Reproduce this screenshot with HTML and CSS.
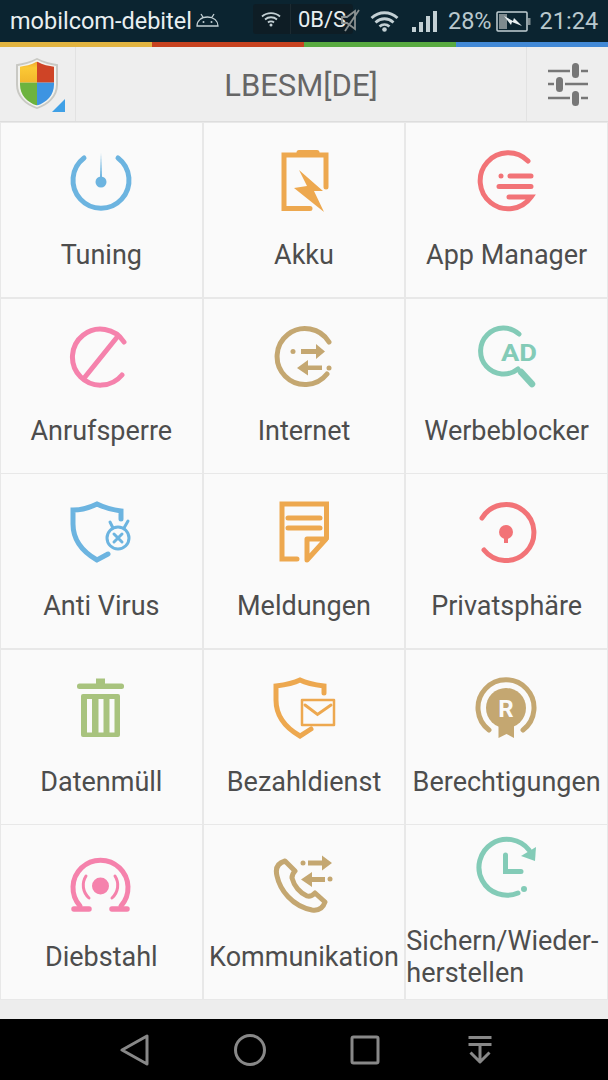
FILE: index.html
```html
<!DOCTYPE html>
<html>

<head>
    <title>LBESM[DE]</title>
    <link rel="stylesheet" href="styles.css">
</head>

<body>
    <!-- Status bar -->
    <div class="status">
        <span class="carrier">mobilcom-debitel</span>
        <svg class="android" width="23" height="14" viewBox="0 0 23 14">
            <path d="M1 13C1 8 5 4 11.500 4S22 8 22 13Z M5 1l2.500 4 M18 1l-2.500 4" />
            <circle cx="7.500" cy="9" r="1" />
            <circle cx="15.500" cy="9" r="1" />
        </svg>
        <div class="speed">
            <span class="speed-wifi">
                <svg width="20" height="16" viewBox="0 0 20 16">
                    <path d="M1 5.500C6 1 14 1 19 5.500 M4 8.500C7.500 5.500 12.500 5.500 16 8.500 M7 11.500C8.500 10 11.500 10 13 11.500" />
                    <circle cx="10" cy="14" r="1.500" />
                </svg>
            </span>
            <span class="speed-text">0B/S</span>
        </div>
        <svg class="mute" width="20" height="24" viewBox="0 0 20 24">
            <path d="M1 9h5l8-6v18l-8-6H1Z M18 2L4 23" />
        </svg>
        <svg class="wifi" width="29" height="21" viewBox="0 0 29 21">
            <path d="M1.500 7C9 0 20 0 27.500 7 M5.500 11.500C11 6.500 18 6.500 23.500 11.500 M9.500 15.500C12.500 13 16.500 13 19.500 15.500" />
            <circle cx="14.500" cy="18.500" r="2.300" />
        </svg>
        <div class="signal">
            <i class="bar-1"></i><i class="bar-2"></i><i class="bar-3"></i><i class="bar-4"></i>
        </div>
        <span class="percent">28%</span>
        <svg class="battery" width="35" height="21" viewBox="0 0 35 21">
            <rect x="1" y="1" width="30" height="19" rx="1" />
            <rect class="battery-fill" x="3" y="3" width="8" height="15" />
            <rect class="battery-fill" x="32" y="7" width="2.500" height="7" />
            <path class="battery-bolt" d="M8 5l9 5 1-3 8 8-10-4-1 3Z" />
        </svg>
        <span class="clock">21:24</span>
    </div>
    <div class="strip">
        <i class="strip-yellow"></i><i class="strip-red"></i><i class="strip-green"></i><i class="strip-blue"></i>
    </div>

    <!-- Title bar -->
    <div class="header">
        <div class="header-logo">
            <svg width="50" height="56" viewBox="0 0 50 56">
                <defs>
                    <clipPath id="shieldClip">
                        <path d="M22 4C16 8 10 9 5 10V30C5 42 12 50 22 54C32 50 39 42 39 30V10C34 9 28 8 22 4Z" />
                    </clipPath>
                    <linearGradient id="yellowFill" x1="0" y1="0" x2="0" y2="1">
                        <stop offset="0" stop-color="#e9922a" />
                        <stop offset="0.4" stop-color="#fbc935" />
                        <stop offset="1" stop-color="#f2b62c" />
                    </linearGradient>
                </defs>
                <g transform="scale(1 0.88)">
                    <path d="M22 0C16 4 8 6 1 7V30C1 44 10 53 22 58C34 53 43 44 43 30V7C36 6 28 4 22 0Z" fill="#c9c9c4" />
                    <path d="M22 2C16 6 9 8 3 9V30C3 43 11 51 22 56C33 51 41 43 41 30V9C35 8 28 6 22 2Z" fill="#f2f2ee" />
                    <g clip-path="url(#shieldClip)">
                        <rect x="0" y="0" width="22" height="28" fill="url(#yellowFill)" />
                        <rect x="22" y="0" width="22" height="28" fill="#cf4426" />
                        <rect x="0" y="28" width="22" height="31" fill="#6db33f" />
                        <rect x="22" y="28" width="22" height="31" fill="#3d94e2" />
                    </g>
                </g>
                <path d="M50 41V54H37Z" fill="#3fa0e6" />
            </svg>
        </div>
        <div class="header-title">LBESM[DE]</div>
        <div class="header-action">
            <svg width="42" height="44" viewBox="0 0 42 44">
                <path d="M1 9h22 M34 9h7 M1 22h6 M18 22h23 M1 36h22 M34 36h7" />
                <rect x="25" y="1" width="7" height="15" rx="3.500" />
                <rect x="9" y="15" width="7" height="15" rx="3.500" />
                <rect x="25" y="29" width="7" height="15" rx="3.500" />
            </svg>
        </div>
    </div>

    <!-- Feature grid -->
    <div class="grid">
        <div class="cell">
            <svg class="icon blue" viewBox="0 0 64 64">
                <path d="M15 9A28 28 0 1 0 49 9" />
                <path class="solid" d="M32 4L33 28H31Z" />
                <circle class="solid" cx="32" cy="33" r="5.500" />
            </svg>
            <div class="label">Tuning</div>
        </div>
        <div class="cell">
            <svg class="icon orange" viewBox="0 0 64 64">
                <path d="M54 38V6H12V59.500H38" />
                <path d="M27 3.500H45" />
                <path class="solid" d="M27 21L51 42H42L52 63L22 39L35 37Z" />
            </svg>
            <div class="label">Akku</div>
        </div>
        <div class="cell">
            <svg class="icon salmon" viewBox="0 0 64 64">
                <path d="M53 12A28 28 0 1 0 56 48H34" />
                <path d="M35 27H56 M24 37.500H56" />
                <circle class="solid" cx="26" cy="27" r="2.500" />
            </svg>
            <div class="label">App Manager</div>
        </div>

        <div class="cell">
            <svg class="icon pink" viewBox="0 0 64 64">
                <path d="M55 17A28 28 0 1 0 53 50" />
                <path d="M49 11L16 52" />
            </svg>
            <div class="label">Anrufsperre</div>
        </div>
        <div class="cell">
            <svg class="icon tan" viewBox="0 0 64 64">
                <path d="M57 17A28 28 0 1 0 55 49" />
                <path class="solid" d="M29 24H44V19L53 26.500L44 34V29H29Z" />
                <path class="solid" d="M50 40.500H36V35L25 43L36 50.500V45H50Z" />
                <circle class="solid" cx="21" cy="26.500" r="2.500" />
                <circle class="solid" cx="57" cy="43" r="2.500" />
            </svg>
            <div class="label">Internet</div>
        </div>
        <div class="cell">
            <svg class="icon teal" viewBox="0 0 64 64">
                <path d="M44 9A23 23 0 1 0 43 44" />
                <path class="thick" d="M46 47L57 59" />
                <text class="icon-text" x="26" y="36" font-size="23" textLength="36" lengthAdjust="spacingAndGlyphs">AD</text>
            </svg>
            <div class="label">Werbeblocker</div>
        </div>

        <div class="cell">
            <svg class="icon blue" viewBox="0 0 64 64">
                <path d="M52 19V11C44 10 36 8 28 4C20 8 12 10 4 10V24C4 40 14 52 28 60L39 54" />
                <circle class="thin" cx="49" cy="38" r="11" />
                <path class="thin" d="M41 22L44 28 M59 21L55 28 M45 34L53 42 M53 34L45 42" />
            </svg>
            <div class="label">Anti Virus</div>
        </div>
        <div class="cell">
            <svg class="icon orange" viewBox="0 0 64 64">
                <path d="M25 59H10V4H54.500V38" />
                <path d="M16 18H48 M16 28H48" />
                <path class="joined" d="M54 39H35V60Z" />
            </svg>
            <div class="label">Meldungen</div>
        </div>
        <div class="cell">
            <svg class="icon salmon" viewBox="0 0 64 64">
                <path d="M7 18A28 28 0 1 1 9 50" />
                <circle class="solid" cx="31" cy="32" r="7" />
                <path class="solid" d="M29 34H33V43H29Z" />
            </svg>
            <div class="label">Privatsphäre</div>
        </div>

        <div class="cell">
            <svg class="icon green" viewBox="0 0 64 64">
                <rect class="solid" x="8" y="7.500" width="47" height="5.500" rx="2.500" />
                <rect class="solid" x="27" y="2.500" width="9" height="6" />
                <path class="solid" fill-rule="evenodd" d="M14 18H49a2 2 0 0 1 2 2V59a2 2 0 0 1-2 2H14a2 2 0 0 1-2-2V20a2 2 0 0 1 2-2Z M18 23V56.500H23V23Z M29.500 23V56.500H34.500V23Z M40.500 23V56.500H45.500V23Z" />
            </svg>
            <div class="label">Datenmüll</div>
        </div>
        <div class="cell">
            <svg class="icon orange" viewBox="0 0 64 64">
                <path d="M52 17V10C44 9 36 8 28 4C20 8 12 9 4 10V24C4 40 14 52 28 60L39 53" />
                <rect class="envelope" x="30" y="24" width="32" height="25" />
                <path class="thin" d="M33 29L45.500 38.500L59 29" />
            </svg>
            <div class="label">Bezahldienst</div>
        </div>
        <div class="cell">
            <svg class="icon tan" viewBox="0 0 64 64">
                <path d="M14 54A28 28 0 1 1 48 54" />
                <circle class="solid" cx="31" cy="32" r="20" />
                <path class="solid" d="M23.500 46H39V62L31.500 58L23.500 62Z" />
                <text class="icon-text icon-text-white" x="31" y="41" font-size="24" text-anchor="middle">R</text>
            </svg>
            <div class="label">Berechtigungen</div>
        </div>

        <div class="cell">
            <svg class="icon pink" viewBox="0 0 64 64">
                <path d="M11 55A27.500 27.500 0 1 1 52 55" />
                <path class="foot" d="M5 58H20 M43 58H58" />
                <path class="thin" d="M17 25A17 17 0 0 0 20 47 M46 25A17 17 0 0 1 43 47" />
                <circle class="solid" cx="31.500" cy="35" r="8.500" />
            </svg>
            <div class="label">Diebstahl</div>
        </div>
        <div class="cell">
            <svg class="icon tan" viewBox="0 0 64 64">
                <path class="phone" d="M13 10C6 12 3 17 5 25C8 39 20 55 40 59C47 60 51 57 53 51L43 42C41 44 38 46 35 45C28 42 22 35 20 27C20 24 21 22 23 20Z" />
                <path class="solid" d="M36 9.500H50V4.500L60 12L50 19.500V14.500H36Z" />
                <path class="solid" d="M53 26H40V21L29 28.500L40 36V31H53Z" />
                <circle class="solid" cx="58" cy="28" r="2.500" />
                <circle class="solid" cx="31" cy="12" r="2.500" />
            </svg>
            <div class="label">Kommunikation</div>
        </div>
        <div class="cell cell-wrap">
            <svg class="icon teal" viewBox="0 0 64 64">
                <path d="M43 58A28 28 0 1 1 54 15" />
                <path class="solid" d="M61 12L60 26L46 21Z" />
                <circle class="solid" cx="49" cy="54" r="3" />
                <path d="M30.500 20V36.500H46" />
            </svg>
            <div class="label">Sichern/Wieder-<br>herstellen</div>
        </div>
    </div>

    <!-- Navigation bar -->
    <div class="nav">
        <div class="nav-item">
            <svg width="30" height="32" viewBox="0 0 30 32"><path d="M2 16L27 2V30Z" /></svg>
        </div>
        <div class="nav-item">
            <svg width="32" height="32" viewBox="0 0 32 32"><circle cx="16" cy="16" r="14.500" /></svg>
        </div>
        <div class="nav-item">
            <svg width="30" height="30" viewBox="0 0 30 30"><rect x="2" y="2" width="26" height="26" rx="1.500" /></svg>
        </div>
        <div class="nav-item">
            <svg width="26" height="28" viewBox="0 0 26 28"><path d="M1.500 1.500H24.500 M1.500 8.500H24.500 M13 8.500V25 M3.500 16.500L13 26L22.500 16.500" /></svg>
        </div>
    </div>
</body>

</html>
```

FILE: styles.css
```css
html, body {
    margin: 0;
    height: 1080px;
    overflow: hidden;
}

body {
    display: flex;
    flex-direction: column;
    font-family: Roboto, sans-serif;
    background-color: #ededed;
}

/* Status bar */
.status {
    display: flex;
    align-items: center;
    height: 42px;
    padding-left: 10px;
    box-sizing: border-box;
    background-color: #0b2430;
    color: #b9c8cd;
    font-size: 23.500px;
}

.status svg {
    flex: none;
    fill: none;
    stroke: #c3d0d4;
}

.status circle {
    fill: #c3d0d4;
    stroke: none;
}

.carrier {
    color: #e9eff1;
}

.android {
    margin: 0 0 2px 4px;
    stroke-width: 1.300;
}

.speed {
    display: flex;
    flex: none;
    align-items: center;
    height: 30px;
    width: 100px;
    margin-left: 34px;
    margin-top: -4px;
    border-radius: 3px;
    background-color: #0e1d25;
    color: #e9eff1;
    font-size: 22px;
}

.speed-wifi {
    display: flex;
    justify-content: center;
    align-items: center;
    width: 38px;
    height: 100%;
    margin-right: 7px;
    border-right: 1px solid #1c2a31;
    box-sizing: border-box;
}

.speed-wifi svg {
    stroke-width: 1.800;
}

.mute {
    margin: -3px 0 0 -12px;
    stroke: #8b9191 !important;
    stroke-width: 1.800;
}

.wifi {
    margin-left: 9px;
    stroke-width: 2.800;
}

.signal {
    display: flex;
    align-items: flex-end;
    gap: 3px;
    height: 22px;
    margin-left: 13px;
}

.signal i {
    width: 4px;
    background-color: #c3d0d4;
}

.bar-1 { height: 5px; }
.bar-2 { height: 10px; }
.bar-3 { height: 16px; }
.bar-4 { height: 21px; }

.percent {
    margin-left: 11px;
}

.battery {
    margin-left: 4px;
    stroke-width: 1.500;
}

.battery-fill {
    fill: #7f8b8f;
    stroke: none;
}

.battery-bolt {
    fill: #e9eff1;
    stroke: none;
}

.clock {
    margin-left: 9px;
}

.strip {
    display: flex;
    flex: none;
    height: 5px;
}

.strip i {
    flex: 1;
}

.strip-yellow { background-color: #e2b440; }
.strip-red { background-color: #c7421f; }
.strip-green { background-color: #58aa40; }
.strip-blue { background-color: #4289d6; }

/* Title bar */
.header {
    display: flex;
    flex: none;
    height: 75px;
    background-color: #eeeeee;
    border-bottom: 1px solid #dddddd;
    box-sizing: border-box;
}

.header-logo {
    display: flex;
    width: 76px;
    padding: 11px 0 0 15px;
    box-sizing: border-box;
    border-right: 1px solid #e2e2e2;
}

.header-title {
    flex: 1;
    text-align: center;
    line-height: 78px;
    font-size: 31px;
    color: #666666;
}

.header-action {
    display: flex;
    justify-content: center;
    align-items: center;
    width: 82px;
    box-sizing: border-box;
    border-left: 1px solid #e2e2e2;
}

.header-action path {
    fill: none;
    stroke: #777777;
    stroke-width: 2.500;
}

.header-action rect {
    fill: #777777;
}

/* Feature grid */
.grid {
    display: grid;
    flex: none;
    grid-template-columns: repeat(3, 1fr);
    grid-auto-rows: 174.100px;
    gap: 1.500px 2px;
    padding: 1px;
    background-color: #e8e8e8;
}

.cell {
    display: flex;
    flex-direction: column;
    align-items: center;
    justify-content: center;
    background-color: #fafafa;
}

.label {
    width: 100%;
    margin-top: 26px;
    text-align: center;
    font-size: 27px;
    line-height: 32px;
    color: #4d4d4d;
    white-space: nowrap;
}

.cell-wrap .label {
    text-align: left;
}

.icon {
    flex: none;
    width: 64px;
    height: 64px;
    fill: none;
    stroke: currentColor;
    stroke-width: 5;
    stroke-linecap: round;
}

.icon .solid {
    fill: currentColor;
    stroke: none;
}

.icon .thin {
    stroke-width: 3;
}

.icon .thick {
    stroke-width: 6.500;
}

.icon .joined {
    stroke-linejoin: round;
}

.icon .envelope {
    stroke-width: 2.500;
    stroke-linejoin: round;
}

.icon .foot {
    stroke-width: 5.500;
}

.icon .phone {
    stroke-width: 5;
    stroke-linejoin: round;
}

.icon-text {
    fill: currentColor;
    stroke: none;
    font-family: Roboto, sans-serif;
    font-weight: 700;
}

.icon-text-white {
    fill: #fafafa;
}

.blue { color: #6cb4e0; }
.orange { color: #eda84f; }
.salmon { color: #f27377; }
.pink { color: #f582ac; }
.tan { color: #c4a771; }
.teal { color: #83cbb7; }
.green { color: #a8c37e; }

/* Navigation bar */
.nav {
    display: flex;
    justify-content: center;
    align-items: center;
    margin-top: auto;
    height: 61px;
    padding-left: 7px;
    box-sizing: border-box;
    background-color: #000000;
}

.nav-item {
    display: flex;
    justify-content: center;
    width: 115px;
}

.nav svg {
    fill: none;
    stroke: #888888;
    stroke-width: 3;
    stroke-linejoin: round;
}
```
